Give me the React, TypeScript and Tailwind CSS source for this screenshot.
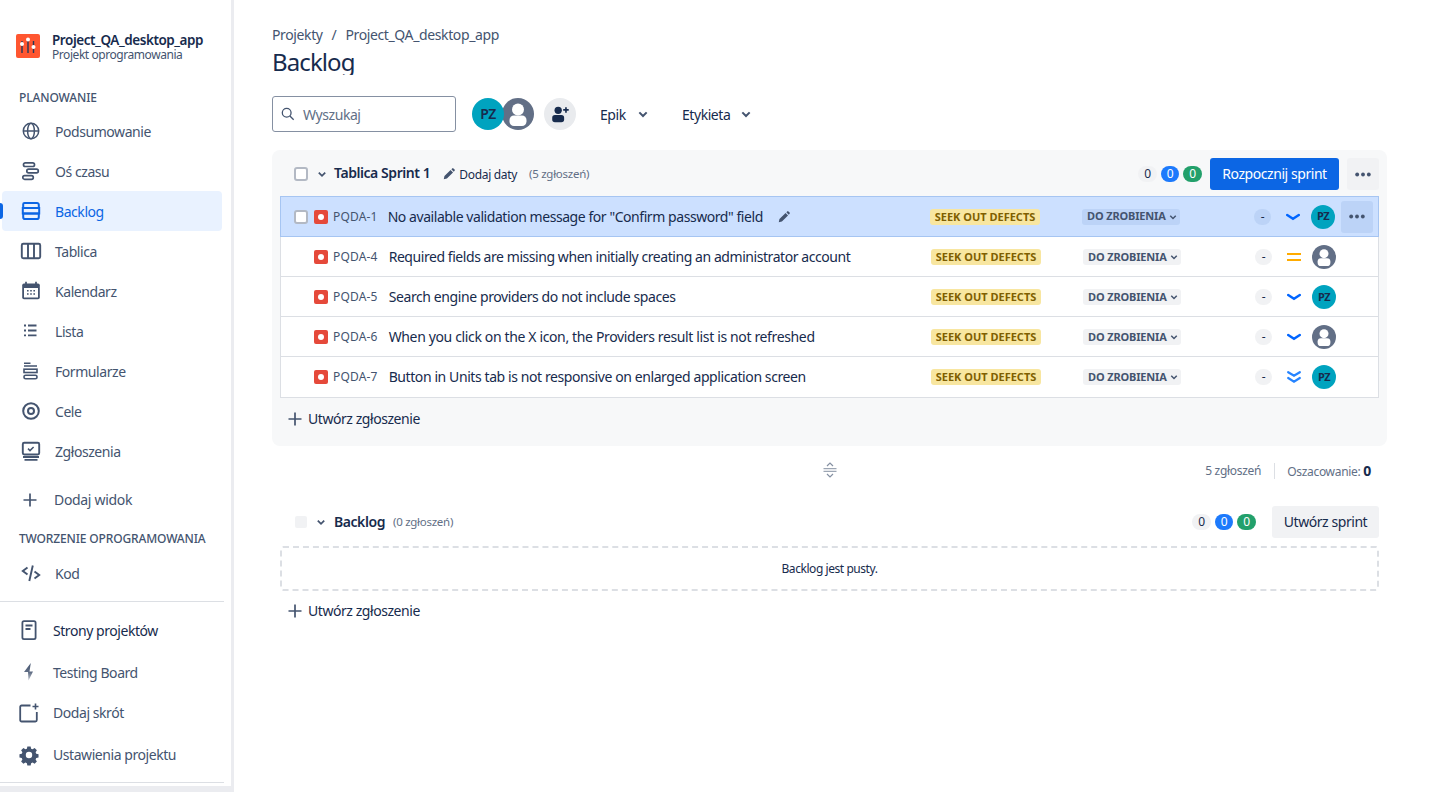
import type { ReactNode } from "react";

const Svg = ({ children, className = "w-6 h-6" }: { children: ReactNode; className?: string }) => (
  <svg viewBox="0 0 24 24" fill="none" className={className}>
    {children}
  </svg>
);

const Globe = () => (
  <Svg>
    <circle cx="12" cy="12" r="7.7" stroke="currentColor" strokeWidth="1.5" />
    <ellipse cx="12" cy="12" rx="3.4" ry="7.7" stroke="currentColor" strokeWidth="1.5" />
    <path d="M4.5 12h15" stroke="currentColor" strokeWidth="1.5" />
  </Svg>
);
const Timeline = () => (
  <Svg>
    <rect x="4.5" y="3.8" width="11" height="3.7" rx="1.8" stroke="currentColor" strokeWidth="1.7" />
    <rect x="7.8" y="10.2" width="11.5" height="3.7" rx="1.8" stroke="currentColor" strokeWidth="1.7" />
    <rect x="3.8" y="16.6" width="10.5" height="3.7" rx="1.8" stroke="currentColor" strokeWidth="1.7" />
  </Svg>
);
const BacklogIcon = () => (
  <Svg>
    <path d="M5.5 4h12.5a1.8 1.8 0 0 1 1.8 1.8V9H4.2V5.3A1.3 1.3 0 0 1 5.5 4z" stroke="currentColor" strokeWidth="2" />
    <rect x="3.8" y="9" width="16.4" height="5.5" stroke="currentColor" strokeWidth="2" />
    <path d="M4.2 14.5h15.6v3.7a1.8 1.8 0 0 1-1.8 1.8H6a1.8 1.8 0 0 1-1.8-1.8z" stroke="currentColor" strokeWidth="2" />
  </Svg>
);
const Board = () => (
  <Svg>
    <rect x="2.8" y="4.8" width="18.4" height="14.4" rx="1.5" stroke="currentColor" strokeWidth="1.9" />
    <path d="M9 5v14M15 5v14" stroke="currentColor" strokeWidth="1.9" />
  </Svg>
);
const Calendar = () => (
  <Svg>
    <rect x="3.2" y="4.5" width="17.6" height="15.8" rx="1.8" fill="currentColor" />
    <rect x="5" y="9" width="14" height="9.5" fill="white" />
    <path d="M7 2.8v3M17 2.8v3" stroke="currentColor" strokeWidth="1.7" />
    <path
      d="M8 11h1.6v1.6H8zM11.2 11h1.6v1.6h-1.6zM14.4 11H16v1.6h-1.6zM8 14.2h1.6v1.6H8zM11.2 14.2h1.6v1.6h-1.6zM14.4 14.2H16v1.6h-1.6z"
      fill="currentColor"
    />
  </Svg>
);
const ListIcon = () => (
  <Svg>
    <path
      d="M5 5.5h2v2H5zM5 10.5h2v2H5zM5 15.5h2v1.8H5zM9 5.5h8.5v2H9zM9 10.5h8.5v2H9zM9 15.5h8.5v1.8H9z"
      fill="currentColor"
    />
  </Svg>
);
const Forms = () => (
  <Svg>
    <path d="M5 4.2h6.5M5 7h13" stroke="currentColor" strokeWidth="1.6" />
    <rect x="5" y="10.2" width="13" height="3.3" stroke="currentColor" strokeWidth="1.6" />
    <rect x="5" y="16.2" width="13" height="3.6" rx="1.6" stroke="currentColor" strokeWidth="1.6" />
  </Svg>
);
const Goal = () => (
  <Svg>
    <circle cx="12" cy="12" r="7.8" stroke="currentColor" strokeWidth="2" />
    <circle cx="12" cy="12" r="3" stroke="currentColor" strokeWidth="2" />
  </Svg>
);
const Issues = () => (
  <Svg>
    <rect x="3.8" y="3.8" width="16.4" height="11.7" rx="1.4" stroke="currentColor" strokeWidth="1.9" />
    <path d="M9 9.6l2 2 3.6-3.6" stroke="currentColor" strokeWidth="1.5" />
    <path d="M4 18h16M5.5 20.8h13" stroke="currentColor" strokeWidth="1.8" />
  </Svg>
);
const Plus = ({ className = "w-6 h-6" }: { className?: string }) => (
  <Svg className={className}>
    <path d="M12 5.5v13M5.5 12h13" stroke="currentColor" strokeWidth="1.7" />
  </Svg>
);
const Code = () => (
  <Svg>
    <path d="M8.5 6.5L3.8 10l4.7 3.5M15.5 10.5l4.7 3.5-4.7 3.5M13.8 4.5L10.3 20" stroke="currentColor" strokeWidth="1.9" />
  </Svg>
);
const PageIcon = () => (
  <Svg>
    <rect x="5.4" y="2.2" width="13.2" height="18" rx="1.6" stroke="currentColor" strokeWidth="1.8" />
    <path d="M8.5 6.5h7M8.5 10h5" stroke="currentColor" strokeWidth="1.8" />
  </Svg>
);
const Bolt = () => (
  <svg viewBox="0 0 24 24" className="w-6 h-6">
    <defs>
      <linearGradient id="bolt" x1="0" y1="0" x2="0" y2="1">
        <stop offset="0" stopColor="#44546f" />
        <stop offset="0.55" stopColor="#626f86" />
        <stop offset="1" stopColor="#c1c7d0" />
      </linearGradient>
    </defs>
    <path d="M13.8 2L7 11h4l.5 8.5 4.5-9h-3.5L13.8 2z" fill="url(#bolt)" />
  </svg>
);
const AddShortcut = () => (
  <Svg>
    <path d="M13.5 4.5H4.6a1.4 1.4 0 0 0-1.4 1.4v13.2a1.4 1.4 0 0 0 1.4 1.4h13.8a1.4 1.4 0 0 0 1.4-1.4V11" stroke="currentColor" strokeWidth="1.8" />
    <path d="M18.5 2.5v6M15.5 5.5h6" stroke="currentColor" strokeWidth="1.6" />
  </Svg>
);
const Gear = () => (
  <svg viewBox="0 0 24 24" className="w-[22px] h-[22px] ml-px">
    <path
      fillRule="evenodd"
      d="M10.2 2.6h3.6l.5 2.5 1.6.7 2.2-1.4 2.5 2.5-1.4 2.2.7 1.6 2.5.5v3.6l-2.5.5-.7 1.6 1.4 2.2-2.5 2.5-2.2-1.4-1.6.7-.5 2.5h-3.6l-.5-2.5-1.6-.7-2.2 1.4-2.5-2.5 1.4-2.2-.7-1.6-2.5-.5v-3.6l2.5-.5.7-1.6-1.4-2.2 2.5-2.5 2.2 1.4 1.6-.7.5-2.5zM12 8.5a3.5 3.5 0 1 0 0 7 3.5 3.5 0 0 0 0-7z"
      fill="currentColor"
    />
  </svg>
);
const Chevron = ({ className = "w-4 h-4" }: { className?: string }) => (
  <Svg className={className}>
    <path d="M6.5 9.5L12 15l5.5-5.5" stroke="currentColor" strokeWidth="3" />
  </Svg>
);
const Pencil = () => (
  <svg viewBox="0 0 16 16" className="w-3.5 h-3.5 text-[#44546f]">
    <path d="M2 14l.8-3.6 7-7 2.8 2.8-7 7L2 14zM10.7 2.6l1-1a1 1 0 0 1 1.4 0l1.3 1.3a1 1 0 0 1 0 1.4l-1 1-2.7-2.7z" fill="currentColor" />
  </svg>
);
const Dots = () => (
  <svg viewBox="0 0 20 6" className="w-[18px] h-[5px] text-[#44546f]">
    <circle cx="3" cy="3" r="2.3" fill="currentColor" />
    <circle cx="10" cy="3" r="2.3" fill="currentColor" />
    <circle cx="17" cy="3" r="2.3" fill="currentColor" />
  </svg>
);
const BugIcon = () => (
  <svg viewBox="0 0 14 14" className="w-3.5 h-3.5 shrink-0">
    <rect width="14" height="14" rx="2" fill="#e5493a" />
    <circle cx="7" cy="7" r="3" fill="white" />
  </svg>
);
const UserAvatar = ({ size = "w-6 h-6" }: { size?: string }) => (
  <svg viewBox="0 0 32 32" className={size}>
    <circle cx="16" cy="16" r="16" fill="#626f86" />
    <circle cx="16" cy="11.5" r="6" fill="white" />
    <rect x="7.5" y="17.5" width="17" height="10.5" rx="4.5" fill="white" />
  </svg>
);
const PriorityIcon = ({ kind }: { kind: "low" | "medium" | "lowest" }) => (
  <svg viewBox="0 0 14 14" className="w-3.5 h-3.5">
    {kind === "medium" && <path d="M0 4h14M0 10h14" stroke="#ffab00" strokeWidth="2.2" />}
    {kind === "low" && <path d="M1.2 5l5.8 3.8L12.8 5" stroke="#0065ff" strokeWidth="2.4" strokeLinecap="round" fill="none" />}
    {kind === "lowest" && (
      <path d="M1.2 2.2L7 5.8l5.8-3.6M1.2 8l5.8 3.6L12.8 8" stroke="#2684ff" strokeWidth="2.2" strokeLinecap="round" fill="none" />
    )}
  </svg>
);

const PzAvatar = () => (
  <div className="w-6 h-6 rounded-full bg-[#00a3bf] flex items-center justify-center text-[11px] font-bold text-[#172b4d]">PZ</div>
);

const planning = [
  { label: "Podsumowanie", icon: <Globe /> },
  { label: "Oś czasu", icon: <Timeline /> },
  { label: "Backlog", icon: <BacklogIcon />, active: true },
  { label: "Tablica", icon: <Board /> },
  { label: "Kalendarz", icon: <Calendar /> },
  { label: "Lista", icon: <ListIcon /> },
  { label: "Formularze", icon: <Forms /> },
  { label: "Cele", icon: <Goal /> },
  { label: "Zgłoszenia", icon: <Issues /> },
];

const issues = [
  { key: "PQDA-1", title: 'No available validation message for "Confirm password" field', priority: "low", user: "pz", selected: true, track: "" },
  { key: "PQDA-4", title: "Required fields are missing when initially creating an administrator account", priority: "medium", user: "none", track: "" },
  { key: "PQDA-5", title: "Search engine providers do not include spaces", priority: "low", user: "pz", track: "tracking-[-0.4px]" },
  { key: "PQDA-6", title: "When you click on the X icon, the Providers result list is not refreshed", priority: "low", user: "none", track: "tracking-[-0.36px]" },
  { key: "PQDA-7", title: "Button in Units tab is not responsive on enlarged application screen", priority: "lowest", user: "pz", track: "tracking-[-0.41px]" },
] as const;

const NavRow = ({ label, icon, active }: { label: string; icon: ReactNode; active?: boolean }) => (
  <div className={`relative h-10 ml-[2px] mr-[9px] rounded flex items-center pl-[17px] text-sm ${active ? "bg-[#e9f2ff] text-[#0c66e4]" : "text-[#44546f]"}`}>
    {active && <span className="absolute -left-0.5 top-3 w-[3px] h-4 rounded-r bg-[#0c66e4]" />}
    <span className={`w-9 shrink-0 ${active ? "text-[#0c66e4]" : "text-[#44546f]"}`}>{icon}</span>
    <span className="pt-0.5">{label}</span>
  </div>
);

const BottomRow = ({ label, icon, dark, h }: { label: string; icon: ReactNode; dark?: boolean; h: string }) => (
  <div className={`flex items-center pl-[17px] text-sm ${h} ${dark ? "text-[#172b4d]" : "text-[#44546f]"}`}>
    <span className="w-9 shrink-0 text-[#44546f]">{icon}</span>
    {label}
  </div>
);

const Counts = () => (
  <div className="flex items-center gap-[4px] text-xs">
    <span className="w-[19px] h-4 rounded-full bg-[#f1f2f4] text-[#172b4d] text-center leading-4">0</span>
    <span className="w-[18px] h-4 rounded-full bg-[#1d7afc] text-white text-center leading-4">0</span>
    <span className="w-[19px] h-4 rounded-full bg-[#22a06b] text-white text-center leading-4">0</span>
  </div>
);

const CreateIssue = () => (
  <div className="flex items-center h-10 pl-[3px] text-sm text-[#172b4d]">
    <Plus className="w-6 h-6 mr-px text-[#44546f]" />
    Utwórz zgłoszenie
  </div>
);

export default function App() {
  return (
    <div className="flex h-[792px] w-full overflow-hidden bg-white [font-family:'Noto_Sans',sans-serif] tracking-[-0.44px]">
      <aside className="w-[234px] shrink-0 border-r-[3px] border-[#ebecf0] flex flex-col">
        <div className="flex items-center h-6 mt-[34px] pl-4">
          <svg viewBox="0 0 24 24" className="w-6 h-6 shrink-0 mr-3">
            <rect width="24" height="24" rx="2" fill="#ff5630" />
            <path d="M6 7v12M12 5v14M17.5 7v12" stroke="#253858" strokeWidth="1.4" />
            <circle cx="6" cy="10" r="2" fill="white" />
            <circle cx="12" cy="5.5" r="2" fill="white" />
            <circle cx="17.5" cy="13" r="2" fill="white" />
          </svg>
          <div className="pt-0.5">
            <div className="text-[13.5px] font-semibold text-[#172b4d] leading-[16px]">Project_QA_desktop_app</div>
            <div className="text-xs text-[#44546f] leading-[14px]">Projekt oprogramowania</div>
          </div>
        </div>
        <div className="pl-[19px] mt-[32px] h-[21px] text-xs font-medium text-[#44546f] leading-4 tracking-[-0.12px]">PLANOWANIE</div>
        {planning.map((item) => (
          <NavRow key={item.label} {...item} />
        ))}
        <div className="flex items-center h-10 mt-[9px] pl-[18px] text-sm text-[#44546f] tracking-[-0.32px]">
          <span className="w-9"><Plus /></span>
          Dodaj widok
        </div>
        <div className="pl-[19px] mt-[11px] h-[22px] text-xs font-medium text-[#44546f] leading-4 whitespace-nowrap tracking-[-0.15px]">TWORZENIE OPROGRAMOWANIA</div>
        <NavRow label="Kod" icon={<Code />} />
        <div className="h-px bg-[#dcdfe4] mt-2 mr-[7px]" />
        <BottomRow label="Strony projektów" icon={<PageIcon />} dark h="h-[58px]" />
        <BottomRow label="Testing Board" icon={<Bolt />} h="h-[26px]" />
        <div className="h-[7px]" />
        <BottomRow label="Dodaj skrót" icon={<AddShortcut />} h="h-10" />
        <BottomRow label="Ustawienia projektu" icon={<Gear />} h="h-[44px]" />
        <div className="h-px bg-[#dcdfe4] mt-[5px] mr-[7px]" />
        <div className="h-[6px] mt-[3px] bg-[#ebecf0]" />
      </aside>

      <main className="w-[1205px] pl-[38px] pr-[52px] pt-[25px] text-[#172b4d]">
        <div className="flex items-center h-5 text-sm text-[#44546f] tracking-[-0.38px]">
          <span>Projekty</span>
          <span className="mx-[9px]">/</span>
          <span>Project_QA_desktop_app</span>
        </div>
        <h1 className="text-2xl leading-[27px] h-[27px] mt-[3px] overflow-hidden tracking-[-0.9px]">Backlog</h1>

        <div className="flex items-center mt-[21px] h-9">
          <div className="w-[184px] h-9 border border-[#8590a2] rounded-[3px] flex items-center pl-2 text-sm text-[#626f86]">
            <svg viewBox="0 0 16 16" className="w-[14px] h-[14px] mr-[8px] text-[#44546f]">
              <circle cx="6.5" cy="6.5" r="5" stroke="currentColor" strokeWidth="1.5" fill="none" />
              <path d="M10.2 10.2l4.3 4.3" stroke="currentColor" strokeWidth="1.5" />
            </svg>
            <span className="pt-0.5">Wyszukaj</span>
          </div>
          <div className="ml-4 w-8 h-8 rounded-full bg-[#00a3bf] flex items-center justify-center text-sm font-semibold text-[#172b4d] relative z-10">PZ</div>
          <div className="-ml-0.5"><UserAvatar size="w-8 h-8" /></div>
          <div className="ml-[10px] w-8 h-8 rounded-full bg-[#e9ebee] flex items-center justify-center">
            <svg viewBox="0 0 24 24" className="w-[22px] h-[22px] text-[#172b4d]">
              <circle cx="10" cy="8" r="4" fill="currentColor" />
              <rect x="3.5" y="13" width="13" height="8" rx="3" fill="currentColor" />
              <path d="M18.5 4.5v6M15.5 7.5h6" stroke="currentColor" strokeWidth="1.8" />
            </svg>
          </div>
          <div className="ml-6 flex items-center text-sm w-[82px] pt-0.5">
            Epik
            <Chevron className="w-4 h-4 ml-[9px] -mt-0.5 text-[#44546f]" />
          </div>
          <div className="flex items-center text-sm pt-0.5">
            Etykieta
            <Chevron className="w-4 h-4 ml-[8px] -mt-0.5 text-[#44546f]" />
          </div>
        </div>

        <section className="mt-[18px] h-[296px] rounded-lg bg-[#f7f8f9] pt-2 px-2">
          <div className="flex items-center h-8">
            <span className="ml-[14px] w-[14px] h-[14px] rounded-[3px] border-2 border-[#b3b9c4] bg-white" />
            <Chevron className="w-3.5 h-3.5 ml-[7px] mr-[5px] text-[#44546f]" />
            <span className="text-sm font-semibold -mt-0.5">Tablica Sprint 1</span>
            <span className="ml-3 mr-[3px]"><Pencil /></span>
            <span className="text-xs mt-0.5 tracking-[-0.32px]">Dodaj daty</span>
            <span className="ml-3 text-[11.5px] text-[#626f86] tracking-[-0.27px]">(5 zgłoszeń)</span>
            <div className="ml-auto"><Counts /></div>
            <button className="ml-2 w-[129px] h-8 rounded-[3px] bg-[#0c66e4] text-white text-sm">Rozpocznij sprint</button>
            <button className="ml-2 w-8 h-8 rounded-[3px] bg-[#f1f2f4] flex items-center justify-center"><Dots /></button>
          </div>

          <div className="mt-[6px] border border-[#dcdfe4] bg-white">
            {issues.map((issue) => (
              <div
                key={issue.key}
                className={`flex items-center pl-[13px] ${issue.selected ? "bg-[#cce0ff] -mx-px -mt-px pr-[5px] border border-[#a6c5f2] h-[41px]" : "h-10 pr-1 pt-px border-b border-[#dcdfe4] last:border-b-transparent"}`}
              >
                <span className={`w-[14px] h-[14px] rounded-[3px] border-2 border-[#b3b9c4] bg-white mr-[6px] shrink-0 ${issue.selected ? "" : "invisible"}`} />
                <BugIcon />
                <span className={`ml-[5px] text-xs text-[#44546f] tracking-[0.18px] ${issue.selected ? "mr-[10px]" : "mr-[11px]"}`}>{issue.key}</span>
                <span className={`text-sm whitespace-nowrap ${issue.track}`}>{issue.title}</span>
                {issue.selected && <span className="ml-[14px]"><Pencil /></span>}
                <span className="flex-1" />
                <span className="w-[110px] h-4 rounded-[3px] bg-[#f8e6a0] text-[11px] font-bold text-[#7f5f01] text-center leading-4 whitespace-nowrap tracking-normal">SEEK OUT DEFECTS</span>
                <span className={`ml-[42px] w-[98px] h-4 rounded-[3px] pl-[5px] flex items-center text-[11px] font-bold text-[#44546f] whitespace-nowrap tracking-[-0.15px] ${issue.selected ? "bg-[#bcd3f7]" : "bg-[#f1f2f4]"}`}>
                  DO ZROBIENIA
                  <Chevron className="w-3 h-3 ml-px text-[#44546f]" />
                </span>
                <span className={`ml-[74px] w-[17px] h-4 rounded-full text-xs text-center leading-4 ${issue.selected ? "bg-[#bcd3f7]" : "bg-[#f1f2f4]"}`}>-</span>
                <span className="ml-[15px] w-3.5 h-3.5"><PriorityIcon kind={issue.priority} /></span>
                <span className="ml-[11px] w-6 h-6">{issue.user === "pz" ? <PzAvatar /> : <UserAvatar />}</span>
                <span className={`ml-[6px] w-8 h-8 rounded-[3px] flex items-center justify-center ${issue.selected ? "bg-[#bcd3f7]" : ""}`}>
                  {issue.selected && <Dots />}
                </span>
              </div>
            ))}
          </div>
          <div className="mt-px"><CreateIssue /></div>
        </section>

        <div className="relative flex items-center justify-end h-[50px] pr-4 text-xs text-[#626f86] tracking-[-0.3px]">
          <svg viewBox="0 0 14 16" className="absolute left-[551px] top-[16px] w-[14px] h-4 text-[#8590a2]">
            <path d="M4 4l3-3 3 3M4 12l3 3 3-3" stroke="currentColor" strokeWidth="1.2" fill="none" />
            <path d="M0.5 6.7h13M0.5 9.3h13" stroke="currentColor" strokeWidth="1" />
          </svg>
          <span>5 zgłoszeń</span>
          <span className="ml-[13px] mr-3 w-px h-4 bg-[#dcdfe4]" />
          <span>Oszacowanie: <b className="text-sm text-[#172b4d]">0</b></span>
        </div>

        <section className="px-2 mt-[10px]">
          <div className="flex items-center h-8">
            <span className="ml-[15px] w-3 h-3 rounded-[2px] bg-[#f1f2f4]" />
            <Chevron className="w-3.5 h-3.5 ml-[7px] mr-[6px] text-[#44546f]" />
            <span className="text-sm font-semibold">Backlog</span>
            <span className="ml-2 text-[11.5px] text-[#626f86] tracking-[-0.27px]">(0 zgłoszeń)</span>
            <div className="ml-auto"><Counts /></div>
            <button className="ml-4 w-[107px] h-8 rounded-[3px] bg-[#f1f2f4] text-sm">Utwórz sprint</button>
          </div>
          <div className="mt-2 h-[45px] rounded-[3px] border-2 border-dashed border-[#dcdfe4] flex items-center justify-center text-xs">
            Backlog jest pusty.
          </div>
          <CreateIssue />
        </section>
      </main>
    </div>
  );
}
